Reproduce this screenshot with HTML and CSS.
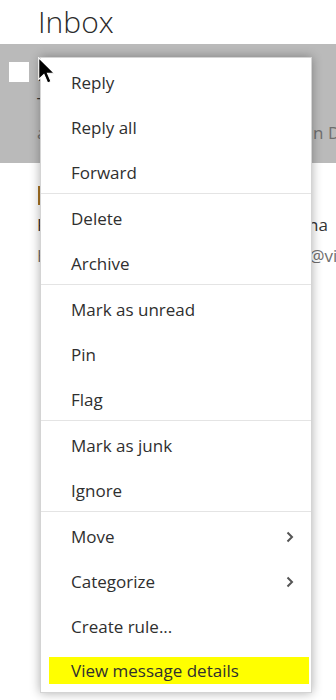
FILE: index.html
```html
<!DOCTYPE html>
<html lang="en">
<head>
    <meta charset="UTF-8" />
    <meta name="viewport" content="width=device-width, initial-scale=1.0"/>
    <title>Inbox</title>
    <link rel="stylesheet" href="styles.css">
</head>
<body>
    <div class="page">
        <h1 class="inbox-title">Inbox</h1>

        <ul class="message-list">
            <li class="message selected">
                <span class="checkbox"></span>
                <div class="message-body">
                    <div class="sender">Lisa Taylor</div>
                    <div class="subject">Team offsite planning</div>
                    <div class="preview">agenda and travel info for the trip in Denver</div>
                </div>
            </li>
            <li class="message">
                <span class="checkbox hidden"></span>
                <div class="message-body">
                    <div class="sender"><span class="unread-mark"></span></div>
                    <div class="subject">Fw: Budget review meeting in Vienna</div>
                    <div class="preview">Hi all, please send numbers to ops@vienna.org</div>
                </div>
            </li>
        </ul>

        <ul class="context-menu">
            <li class="menu-group">
                <div class="menu-item">Reply</div>
                <div class="menu-item">Reply all</div>
                <div class="menu-item">Forward</div>
            </li>
            <li class="menu-group">
                <div class="menu-item">Delete</div>
                <div class="menu-item">Archive</div>
            </li>
            <li class="menu-group">
                <div class="menu-item">Mark as unread</div>
                <div class="menu-item">Pin</div>
                <div class="menu-item">Flag</div>
            </li>
            <li class="menu-group">
                <div class="menu-item">Mark as junk</div>
                <div class="menu-item">Ignore</div>
            </li>
            <li class="menu-group">
                <div class="menu-item">Move
                    <svg class="chevron" viewBox="0 0 8 12" width="8" height="12"><polyline points="1.5,1.5 6,6 1.5,10.5"/></svg>
                </div>
                <div class="menu-item">Categorize
                    <svg class="chevron" viewBox="0 0 8 12" width="8" height="12"><polyline points="1.5,1.5 6,6 1.5,10.5"/></svg>
                </div>
                <div class="menu-item">Create rule...</div>
                <div class="menu-item marked"><span class="highlight">View message details</span></div>
            </li>
        </ul>

        <!-- mouse pointer -->
        <svg class="cursor" viewBox="0 0 12 19" width="17" height="27">
            <path d="M0.5 0.5 L0.5 15.8 L4.2 12.3 L6.8 18.3 L9.2 17.3 L6.7 11.4 L11.4 11.4 Z"/>
        </svg>
    </div>
</body>
</html>
```

FILE: styles.css
```css
* {
    margin: 0;
    padding: 0;
    box-sizing: border-box;
}

body {
    font-family: 'Open Sans', 'Noto Sans', sans-serif;
    color: #333;
    background: #fff;
}

.page {
    position: relative;
    width: 336px;
    height: 700px;
    overflow: hidden;
}

.inbox-title {
    font-size: 30px;
    font-weight: 300;
    line-height: 44px;
    padding-left: 38px;
    color: #2b2b2b;
}

.message-list {
    list-style: none;
}

.message {
    display: flex;
    align-items: flex-start;
    gap: 8px;
    padding: 16px 0 16px 9px;
    font-size: 17px;
    line-height: 29px;
    white-space: nowrap;
}

.message.selected {
    background: #bababa;
}

.message:not(.selected) {
    padding-top: 15px;
    line-height: 31px;
}

.checkbox {
    flex: none;
    width: 20px;
    height: 20px;
    margin-top: 2px;
    background: #fff;
}

.checkbox.hidden {
    visibility: hidden;
}

.unread-mark {
    display: inline-block;
    width: 2px;
    height: 19px;
    margin-left: 1px;
    vertical-align: middle;
    background: #a87424;
}

.sender,
.subject {
    color: #333;
}

.preview {
    color: #6e6e6e;
}

.context-menu {
    position: absolute;
    left: 40px;
    top: 57px;
    width: 272px;
    list-style: none;
    background: #fff;
    border: 1px solid #d4d4d4;
    box-shadow: 0 0 10px rgba(0, 0, 0, 0.32);
    font-size: 17px;
    color: #2f2f2f;
}

.menu-group + .menu-group {
    border-top: 1px solid #e4e4e4;
}

.menu-item {
    display: flex;
    align-items: center;
    justify-content: space-between;
    height: 45px;
    padding: 4px 17px 0 30px;
    line-height: 41px;
}

.chevron {
    fill: none;
    stroke: #555;
    stroke-width: 2;
}

.menu-item.marked {
    display: block;
    padding: 10px 2px 8px 8px;
}

.highlight {
    display: block;
    height: 27px;
    line-height: 27px;
    padding-left: 22px;
    background: #ffff00;
}

.cursor {
    position: absolute;
    left: 38px;
    top: 57px;
    fill: #000;
    stroke: #fff;
    stroke-width: 0.8;
}
```
